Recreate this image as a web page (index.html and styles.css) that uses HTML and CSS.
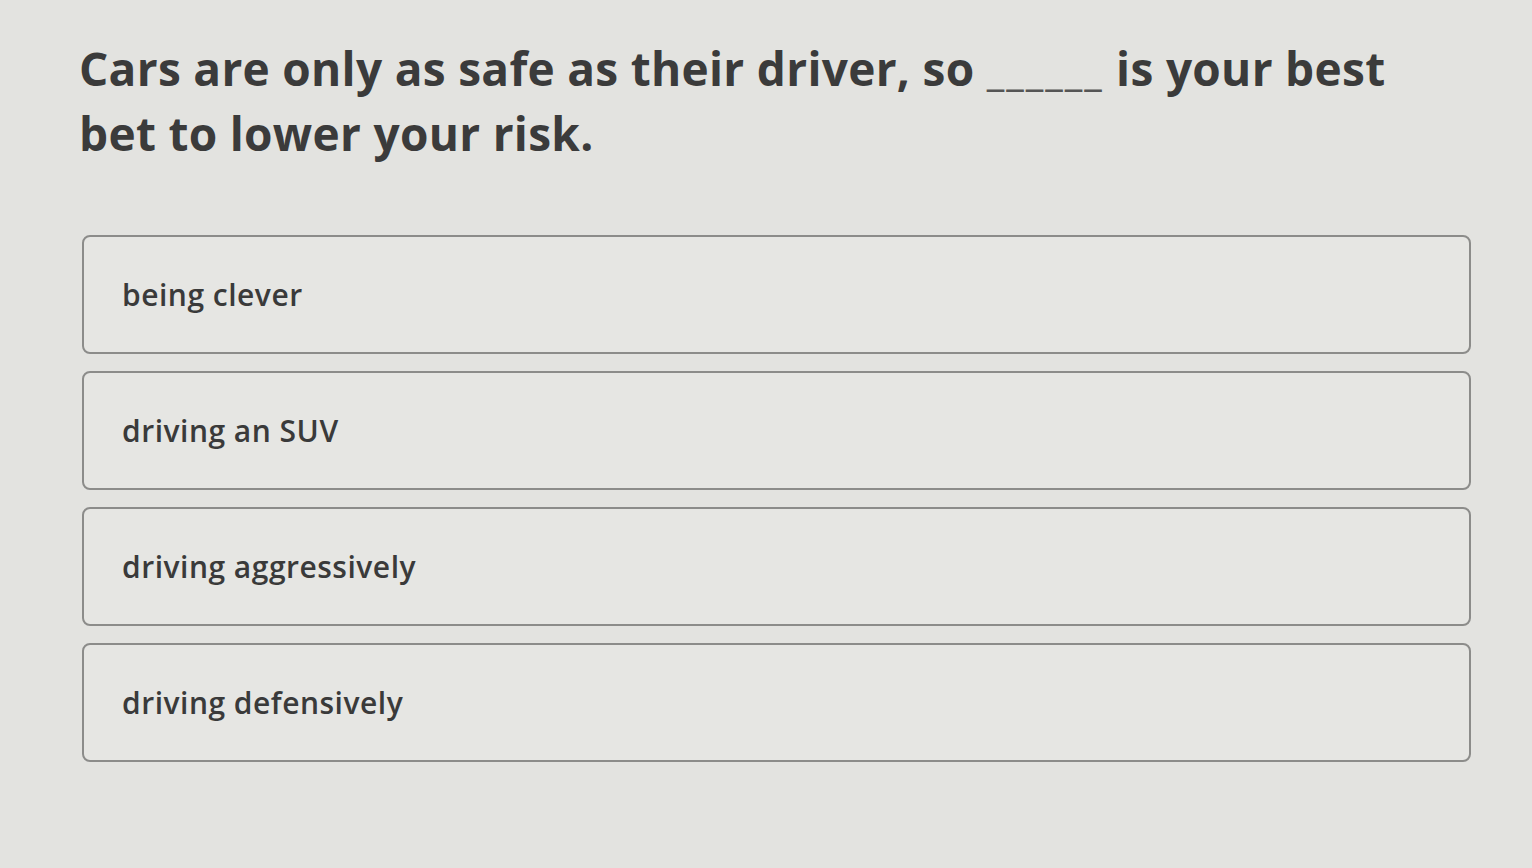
FILE: index.html
```html
<!DOCTYPE html>
<html>
<head>
<meta charset="utf-8">
<link rel="stylesheet" href="styles.css">
</head>
<body>
<main class="quiz">
  <h1 class="question">Cars are only as safe as their driver, so <span class="blank">______</span> is your best bet to lower your risk.</h1>
  <ul class="options">
    <li class="option">being clever</li>
    <li class="option">driving an SUV</li>
    <li class="option">driving aggressively</li>
    <li class="option">driving defensively</li>
  </ul>
</main>
</body>
</html>
```

FILE: styles.css
```css
html, body {
  margin: 0;
  padding: 0;
}
body {
  background: #e3e3e0;
  font-family: "Open Sans", "Noto Sans", sans-serif;
  color: #3b3b3b;
  width: 1532px;
  height: 868px;
  overflow: hidden;
}
.quiz {
  padding: 36px 60px 0 79px;
}
.question {
  margin: 0;
  width: 1340px;
  font-size: 46px;
  font-weight: 700;
  line-height: 65px;
  letter-spacing: 0.3px;
}
.blank {
  font-weight: 400;
  color: #555;
  letter-spacing: 2px;
  font-size: 40px;
  line-height: 1;
}
.options {
  list-style: none;
  margin: 69px 0 0 3px;
  padding: 0;
  width: 1389px;
  display: flex;
  flex-direction: column;
  gap: 17px;
}
.option {
  box-sizing: border-box;
  height: 119px;
  border: 2px solid #8c8c8a;
  border-radius: 8px;
  background: #e6e6e3;
  display: flex;
  align-items: center;
  padding-left: 38px;
  font-size: 30px;
  font-weight: 600;
  letter-spacing: 0.5px;
  color: #3a3a3a;
}
```
